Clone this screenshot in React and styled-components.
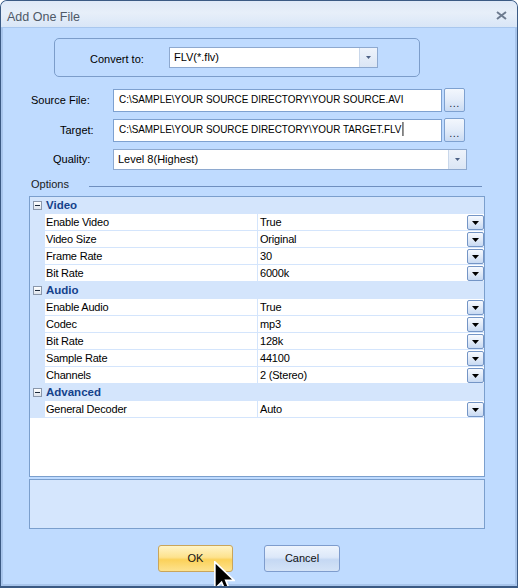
import React from 'react';
import styled, { createGlobalStyle } from 'styled-components';

const GlobalStyle = createGlobalStyle`
  html, body {
    margin: 0;
    padding: 0;
    background: #ffffff;
  }
  body {
    font-family: "Liberation Sans", Arial, sans-serif;
    font-size: 11px;
    color: #000;
  }
`;

const sections = [
  {
    title: 'Video',
    rows: [
      ['Enable Video', 'True'],
      ['Video Size', 'Original'],
      ['Frame Rate', '30'],
      ['Bit Rate', '6000k'],
    ],
  },
  {
    title: 'Audio',
    rows: [
      ['Enable Audio', 'True'],
      ['Codec', 'mp3'],
      ['Bit Rate', '128k'],
      ['Sample Rate', '44100'],
      ['Channels', '2 (Stereo)'],
    ],
  },
  {
    title: 'Advanced',
    rows: [['General Decoder', 'Auto']],
  },
];

const ArrowSmall = () => (
  <svg width="5" height="3" viewBox="0 0 5 3"><path d="M0 0 H5 L2.5 3 Z" fill="#4d6185" /></svg>
);

export default function App() {
  return (
    <>
      <GlobalStyle />
      <Window>
        <TitleBar>
          <Title>Add One File</Title>
          <CloseIcon width="11" height="9" viewBox="0 0 11 9">
            <path d="M1 1 L10 8 M10 1 L1 8" stroke="#6e7c90" strokeWidth="2" />
          </CloseIcon>
        </TitleBar>
        <Frame>
          <ConvertGroup>
            <GroupLabel>Convert to:</GroupLabel>
            <Select $width={209}>
              <SelectText>FLV(*.flv)</SelectText>
              <SelectArrow><ArrowSmall /></SelectArrow>
            </Select>
          </ConvertGroup>

          <FormRow $top={11}>
            <FieldLabel $indent={28}>Source File:</FieldLabel>
            <TextField>
              <PathText>C:\SAMPLE\YOUR SOURCE DIRECTORY\YOUR SOURCE.AVI</PathText>
            </TextField>
            <BrowseButton>...</BrowseButton>
          </FormRow>
          <FormRow $top={6}>
            <FieldLabel $indent={57}>Target:</FieldLabel>
            <TextField>
              <PathText>
                C:\SAMPLE\YOUR SOURCE DIRECTORY\YOUR TARGET.FLV<Caret />
              </PathText>
            </TextField>
            <BrowseButton>...</BrowseButton>
          </FormRow>
          <FormRow $top={7}>
            <FieldLabel $indent={50}>Quality:</FieldLabel>
            <Select $width={354}>
              <SelectText>Level 8(Highest)</SelectText>
              <SelectArrow><ArrowSmall /></SelectArrow>
            </Select>
          </FormRow>

          <OptionsHeader>
            <span>Options</span>
            <OptionsLine />
          </OptionsHeader>

          <PropertyGrid>
            {sections.map((s) => (
              <React.Fragment key={s.title}>
                <CategoryRow>
                  <Gutter>
                    <MinusBox />
                  </Gutter>
                  <CategoryTitle>{s.title}</CategoryTitle>
                </CategoryRow>
                {s.rows.map(([name, value]) => (
                  <PropRow key={s.title + name}>
                    <Gutter />
                    <NameCell>{name}</NameCell>
                    <ValueCell>
                      <span>{value}</span>
                      <DropButton>
                        <svg width="7" height="4" viewBox="0 0 7 4"><path d="M0 0 H7 L3.5 4 Z" fill="#000" /></svg>
                      </DropButton>
                    </ValueCell>
                  </PropRow>
                ))}
              </React.Fragment>
            ))}
          </PropertyGrid>

          <Description />

          <ButtonBar>
            <DialogButton $primary $left={155} $width={75}>OK</DialogButton>
            <DialogButton $left={31} $width={76}>Cancel</DialogButton>
          </ButtonBar>
        </Frame>
        <Cursor width="21" height="33" viewBox="0 0 12.5 19.5">
          <path
            d="M0.5 0.5 L0.5 16.5 L4.5 12.5 L7 18.5 L9.5 17.5 L7 11.5 L12 11.5 Z"
            fill="#000"
            stroke="#fff"
            strokeWidth="1"
            strokeLinejoin="miter"
          />
        </Cursor>
      </Window>
    </>
  );
}

const Window = styled.div`
  position: relative;
  width: 518px;
  height: 588px;
  box-sizing: border-box;
  border: 1px solid #3b5a84;
  border-bottom-width: 2px;
  border-radius: 7px 7px 0 0;
  background: #bfdbff;
  display: flex;
  flex-direction: column;
  overflow: hidden;
`;

const TitleBar = styled.div`
  height: 26px;
  flex: none;
  display: flex;
  align-items: center;
  justify-content: space-between;
  padding: 0 10px 0 6px;
  background: linear-gradient(#dfe9f7, #e7eff9 45%, #d9e6f7);
  border-bottom: 1px solid #a9c7ee;
`;

const Title = styled.span`
  font-size: 12.5px;
  color: #4f5967;
  margin-top: 5px;
`;

const CloseIcon = styled.svg`
  display: block;
  margin-top: 3px;
`;

const Frame = styled.div`
  flex: 1;
  display: flex;
  flex-direction: column;
  border-left: 2px solid #a8c5ec;
  border-right: 2px solid #a8c5ec;
  border-bottom: 2px solid #a8c5ec;
`;

const ConvertGroup = styled.div`
  margin: 10px 0 0 51px;
  width: 366px;
  height: 39px;
  box-sizing: border-box;
  border: 1px solid #7c9dca;
  border-radius: 5px;
  display: flex;
  align-items: center;
`;

const GroupLabel = styled.span`
  width: 79px;
  padding-left: 35px;
  margin-top: 2px;
`;

const Select = styled.div`
  width: ${(p) => p.$width}px;
  height: 21px;
  box-sizing: border-box;
  background: #fff;
  border: 1px solid #8ea9cf;
  display: flex;
  align-items: stretch;
`;

const SelectText = styled.span`
  flex: 1;
  padding-left: 4px;
  line-height: 18px;
`;

const SelectArrow = styled.span`
  width: 17px;
  display: flex;
  align-items: center;
  justify-content: center;
  background: linear-gradient(#eef3fb, #dbe6f5);
  border-left: 1px solid #c9d7ea;
`;

const FormRow = styled.div`
  display: flex;
  align-items: center;
  margin-top: ${(p) => p.$top}px;
`;

const FieldLabel = styled.span`
  width: ${(p) => 110 - p.$indent}px;
  padding-left: ${(p) => p.$indent}px;
  margin-top: -1px;
`;

const TextField = styled.div`
  width: 329px;
  height: 23px;
  box-sizing: border-box;
  background: #fff;
  border: 1px solid #7ea1d0;
  padding-left: 5px;
  line-height: 19px;
  white-space: nowrap;
  overflow: hidden;
`;

const PathText = styled.span`
  display: inline-block;
  transform: scaleX(0.9);
  transform-origin: left center;
`;

const Caret = styled.span`
  display: inline-block;
  width: 1px;
  height: 14px;
  margin-left: 1px;
  background: #000;
  vertical-align: -3px;
`;

const BrowseButton = styled.div`
  width: 21px;
  height: 24px;
  margin-left: 2px;
  box-sizing: border-box;
  border: 1px solid #7ea1d0;
  border-radius: 2px;
  background: linear-gradient(#f3f7fd, #e3ecf9 50%, #c9dbf3);
  text-align: center;
  line-height: 28px;
  color: #1b2c44;
  letter-spacing: 0.5px;
`;

const OptionsHeader = styled.div`
  display: flex;
  align-items: center;
  height: 14px;
  margin: 7px 0 0 28px;
  color: #1a1a1a;
`;

const OptionsLine = styled.div`
  width: 393px;
  height: 1px;
  margin-left: 20px;
  margin-top: 4px;
  background: #6f8fbf;
`;

const PropertyGrid = styled.div`
  margin: 5px 0 0 26px;
  width: 456px;
  height: 281px;
  box-sizing: border-box;
  border: 1px solid #7b9fcd;
  background: #fff;
  display: flex;
  flex-direction: column;
`;

const CategoryRow = styled.div`
  height: 17px;
  display: flex;
  align-items: center;
  background: #d4e5fc;
`;

const Gutter = styled.div`
  width: 15px;
  align-self: stretch;
  flex: none;
  background: #d4e5fc;
  display: flex;
  align-items: center;
`;

const MinusBox = styled.span`
  position: relative;
  width: 9px;
  height: 9px;
  margin-left: 3px;
  box-sizing: border-box;
  border: 1px solid #8a97ab;
  background: linear-gradient(#ffffff, #dde3ec);
  &::after {
    content: '';
    position: absolute;
    left: 1px;
    top: 3px;
    width: 5px;
    height: 1px;
    background: #1d2a3c;
  }
`;

const CategoryTitle = styled.span`
  font-weight: bold;
  font-size: 11.5px;
  color: #15428b;
  padding-left: 1px;
  margin-top: -1px;
`;

const PropRow = styled.div`
  height: 17px;
  box-sizing: border-box;
  display: flex;
  border-bottom: 1px solid #d4e5fc;
`;

const NameCell = styled.div`
  width: 211px;
  display: flex;
  align-items: center;
  padding-left: 1px;
  border-right: 1px solid #d4e5fc;
  letter-spacing: -0.2px;
`;

const ValueCell = styled.div`
  flex: 1;
  display: flex;
  align-items: center;
  justify-content: space-between;
  padding-left: 2px;
  letter-spacing: -0.2px;
`;

const DropButton = styled.span`
  width: 17px;
  height: 15px;
  box-sizing: border-box;
  border: 1px solid #7495c6;
  border-radius: 2px;
  background: linear-gradient(#f7faff, #e2ebf8 50%, #c8daf3);
  display: flex;
  align-items: center;
  justify-content: center;
  margin-top: 1px;
`;

const Description = styled.div`
  margin: 2px 0 0 26px;
  width: 456px;
  height: 50px;
  box-sizing: border-box;
  border: 1px solid #7b9fcd;
  background: #d5e6fd;
`;

const ButtonBar = styled.div`
  display: flex;
  margin-top: 16px;
`;

const DialogButton = styled.div`
  margin-left: ${(p) => p.$left}px;
  width: ${(p) => p.$width}px;
  height: 27px;
  box-sizing: border-box;
  border-radius: 3px;
  border: 1px solid ${(p) => (p.$primary ? '#c9a55b' : '#7e9ccd')};
  background: ${(p) =>
    p.$primary
      ? 'linear-gradient(#fff4c6, #fde28e 45%, #fbd15a 55%, #fde28e)'
      : 'linear-gradient(#eef4fd, #dce8f9 45%, #c5d8f3 55%, #d4e3f7)'};
  text-align: center;
  line-height: 24px;
  color: #111;
`;

const Cursor = styled.svg`
  position: absolute;
  left: 213px;
  top: 560px;
`;
